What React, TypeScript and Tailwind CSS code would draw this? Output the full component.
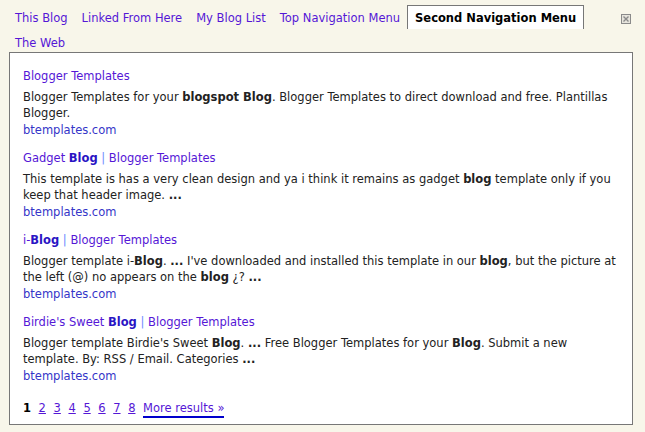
import React from "react";

const LINK = "text-[#5517d6]";

interface Result {
  title: React.ReactNode;
  snippet: React.ReactNode;
}

const results: Result[] = [
  {
    title: <>Blogger Templates</>,
    snippet: (
      <>
        Blogger Templates for your <b>blogspot Blog</b>. Blogger Templates to direct download and free. Plantillas Blogger.
      </>
    ),
  },
  {
    title: (
      <>
        Gadget <b className="text-[#2a14c4]">Blog</b> <span className="text-[#6f8cff]">|</span> Blogger Templates
      </>
    ),
    snippet: (
      <>
        This template is has a very clean design and ya i think it remains as gadget <b>blog</b> template only if you keep that header image. <b>...</b>
      </>
    ),
  },
  {
    title: (
      <>
        i-<b className="text-[#2a14c4]">Blog</b> <span className="text-[#6f8cff]">|</span> Blogger Templates
      </>
    ),
    snippet: (
      <>
        Blogger template i-<b>Blog</b>. <b>...</b> I've downloaded and installed this template in our <b>blog</b>, but the picture at the left (@) no appears on the <b>blog</b> ¿? <b>...</b>
      </>
    ),
  },
  {
    title: (
      <>
        Birdie's Sweet <b className="text-[#2a14c4]">Blog</b> <span className="text-[#6f8cff]">|</span> Blogger Templates
      </>
    ),
    snippet: (
      <>
        Blogger template Birdie's Sweet <b>Blog</b>. <b>...</b> Free Blogger Templates for your <b>Blog</b>. Submit a new template. By: RSS / Email. Categories <b>...</b>
      </>
    ),
  },
];

const tabs = ["This Blog", "Linked From Here", "My Blog List", "Top Navigation Menu"];

export default function App() {
  return (
    <div className="w-[645px] h-[432px] bg-[#f8f6ea] font-['DejaVu_Sans',Verdana,sans-serif] text-[11.5px] leading-4 text-[#222] overflow-hidden">
      {/* tab strip */}
      <div className="flex items-start pl-[8px] pr-[14px] pt-[5px]">
        <div className="flex flex-wrap flex-1">
          {tabs.map((t) => (
            <span key={t} className={`h-[25px] px-[6px] flex items-center border border-transparent ${LINK}`}>
              {t}
            </span>
          ))}
          <span className="h-[24px] px-[7px] flex items-center border border-b-0 border-[#777] bg-white font-bold text-black">
            Second Navigation Menu
          </span>
          <span className={`h-[25px] px-[6px] flex items-center border border-transparent ${LINK}`}>The Web</span>
        </div>
        <svg width="10" height="10" viewBox="0 0 10 10" className="mt-[9px] ml-px">
          <rect x="0.5" y="0.5" width="9" height="9" fill="#e6e4dc" stroke="#8a8a8a" />
          <path d="M2.5 2.5 L7.5 7.5 M7.5 2.5 L2.5 7.5" stroke="#8a8a8a" strokeWidth="1.4" />
        </svg>
      </div>

      {/* results */}
      <div className="mx-[9px] mt-[-3px] w-[624px] h-[373px] border border-[#777] bg-white px-[13px] pt-[15px]">
        <div className="flex flex-col gap-3">
          {results.map((r, i) => (
            <div key={i} className="flex flex-col">
              <div className={LINK}>{r.title}</div>
              <div className="mt-[5px]">{r.snippet}</div>
              <div className="mt-px text-[#3535c8]">btemplates.com</div>
            </div>
          ))}
        </div>
        <div className="flex items-start gap-[7.6px] mt-4">
          <span className="font-bold text-black">1</span>
          {["2", "3", "4", "5", "6", "7", "8"].map((n) => (
            <span key={n} className={`${LINK} underline`}>
              {n}
            </span>
          ))}
          <span className={`${LINK} border-b-2 border-[#0000cc]`}>More results »</span>
        </div>
      </div>
    </div>
  );
}
